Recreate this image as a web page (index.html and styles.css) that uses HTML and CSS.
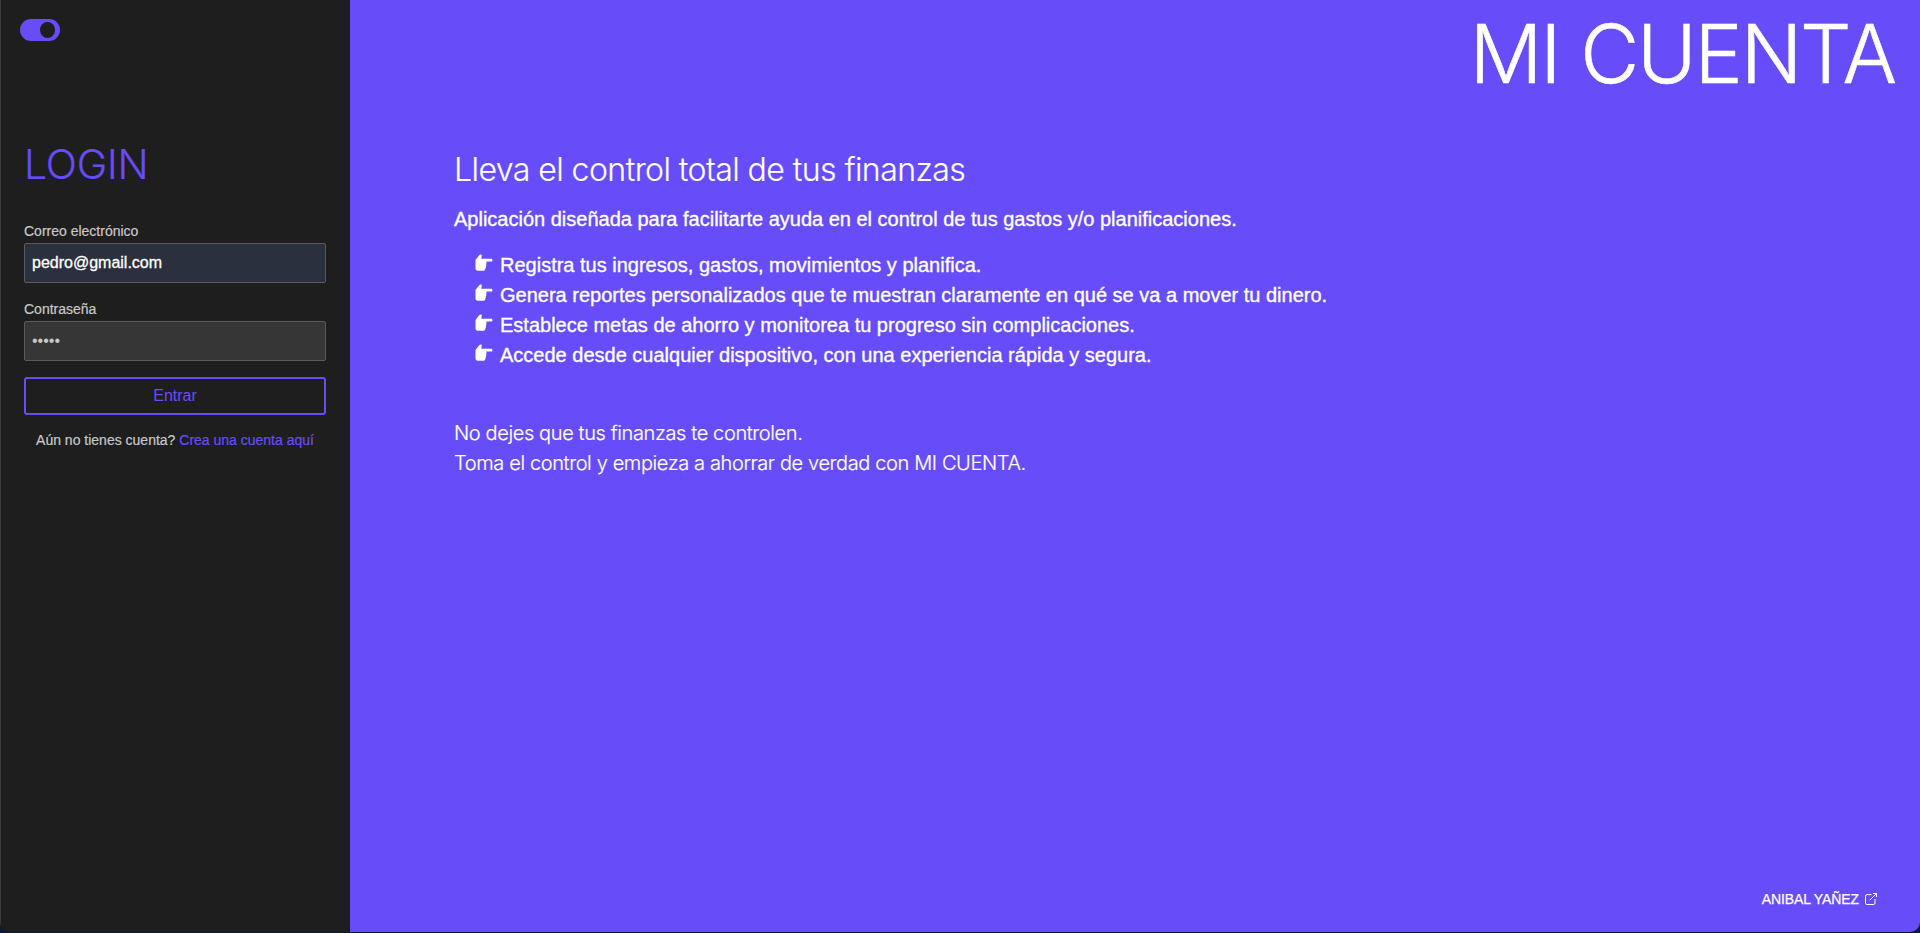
FILE: index.html
```html
<!DOCTYPE html>
<html lang="es">
<head>
<meta charset="utf-8">
<title>Mi Cuenta</title>
<link rel="stylesheet" href="styles.css">
</head>
<body>
<svg width="0" height="0" class="defs"><symbol id="hand" viewBox="0 0 18 18"><path d="M.8 5.4 4.2 1.2C5.1-.1 7.1.2 6.8 1.8L6.2 4.8H16.2C17.9 4.8 17.9 7.6 16.2 7.6H11.1C11.8 8.2 11.7 9.5 11 10C11.6 10.7 11.4 12 10.7 12.4C11.2 13 11 14.2 10.3 14.6C10.4 15.9 9.8 16.7 8.7 16.7H2.8C1.3 16.7.5 15.8.5 14.3V6.5Z"/></symbol></svg>
<div class="window">
  <aside class="sidebar">
    <div class="switch"><span class="knob"></span></div>
    <form class="login">
      <h1 class="login-title">LOGIN</h1>
      <div class="field"><label>Correo electrónico</label><div class="input filled">pedro@gmail.com</div></div>
      <div class="field"><label>Contraseña</label><div class="input dots">•••••</div></div>
      <button type="button" class="submit">Entrar</button>
      <p class="signup">Aún no tienes cuenta? <a>Crea una cuenta aquí</a></p>
    </form>
  </aside>
  <main class="main">
    <header class="brand">MI CUENTA</header>
    <section class="content">
      <h2 class="headline">Lleva el control total de tus finanzas</h2>
      <p class="lead">Aplicación diseñada para facilitarte ayuda en el control de tus gastos y/o planificaciones.</p>
      <ul class="features">
        <li><svg class="hand"><use href="#hand"/></svg>Registra tus ingresos, gastos, movimientos y planifica.</li>
        <li><svg class="hand"><use href="#hand"/></svg>Genera reportes personalizados que te muestran claramente en qué se va a mover tu dinero.</li>
        <li><svg class="hand"><use href="#hand"/></svg>Establece metas de ahorro y monitorea tu progreso sin complicaciones.</li>
        <li><svg class="hand"><use href="#hand"/></svg>Accede desde cualquier dispositivo, con una experiencia rápida y segura.</li>
      </ul>
      <p class="closing">No dejes que tus finanzas te controlen.<br>Toma el control y empieza a ahorrar de verdad con MI CUENTA.</p>
    </section>
    <footer class="credit">ANIBAL YAÑEZ<svg class="ext" viewBox="0 0 12 12"><path d="M6.5 1.6H2A1.5 1.5 0 0 0 .5 3.1V10A1.5 1.5 0 0 0 2 11.5H8.5A1.5 1.5 0 0 0 10 10V6M8 .5H11.5V4M11.5.5 4.8 7.2"/></svg></footer>
  </main>
</div>
</body>
</html>
```
FILE: styles.css
```css
* { box-sizing: border-box; margin: 0; padding: 0; }
html, body { height: 100%; }
body { background: #0b1a3c; font-family: "Liberation Sans", Arial, sans-serif; overflow: hidden; }
.defs { display: block; }
.window { display: flex; height: 932px; border-radius: 0 0 10px 10px; overflow: hidden; background: #1e1e1e; }
.sidebar { width: 350px; flex: none; background: #1e1e1e; border-left: 1px solid #3c3c3c; padding: 19px 24px 0 23px; color: #c8c8c8; }
.switch { width: 40px; height: 22px; margin-left: -4px; border-radius: 11px; background: #674dfa; padding: 3px 5px; display: flex; justify-content: flex-end; }
.knob { width: 15px; height: 16px; border-radius: 50%; background: #1e1e1e; }
.login { margin-top: 98px; }
.login-title { font: 300 41px/50px Inter, sans-serif; letter-spacing: -.2px; color: #674dfa; margin-bottom: 31px; -webkit-text-stroke: .2px; }
.field { margin-bottom: 16px; }
.field label { display: block; font-size: 14px; line-height: 22px; height: 23px; -webkit-text-stroke: .2px; }
.field + .field { margin-top: -1px; }
.input { height: 40px; border: 1px solid #5a5a5a; border-radius: 2px; background: #363636; padding: 0 7px; font-size: 16px; line-height: 38px; }
.filled { background: #2b303f; color: #fff; -webkit-text-stroke: .3px; }
.dots { line-height: 37px; }
.submit { display: block; width: 302px; height: 38px; border: 2px solid #674dfa; border-radius: 3px; background: none; color: #674dfa; font: 16px/34px "Liberation Sans", Arial, sans-serif; }
.signup { text-align: center; font-size: 14px; line-height: 20px; margin-top: 15px; -webkit-text-stroke: .2px; }
.signup a { color: #674dfa; }
.main { flex: 1; background: #674dfa; color: #fff; display: flex; flex-direction: column; }
.brand { text-align: right; padding-right: 25px; font: 300 81px/108px Inter, sans-serif; letter-spacing: -2.1px; height: 140px; -webkit-text-stroke: .6px; }
.content { padding: 10px 0 0 104px; flex: 1; }
.headline { font: 300 32px/40px Inter, sans-serif; letter-spacing: -.55px; -webkit-text-stroke: .15px; }
.lead { font-size: 20px; line-height: 30px; margin-top: 14px; -webkit-text-stroke: .35px; }
.features { list-style: none; margin: 16px 0 0 21px; font-size: 20px; line-height: 30px; -webkit-text-stroke: .35px; }
.features li { display: flex; align-items: center; gap: 7px; height: 30px; }
.hand { width: 18px; height: 18px; margin-bottom: 4px; fill: #fff; stroke: none; }
.closing { margin-top: 48px; font: 300 20px/30px Inter, sans-serif; letter-spacing: -.38px; -webkit-text-stroke: .2px; }
.credit { align-self: flex-end; display: flex; align-items: center; gap: 6px; margin: 0 43px 23px 0; font-size: 14px; letter-spacing: -.1px; line-height: 20px; -webkit-text-stroke: .25px; }
.ext { width: 12px; height: 12px; fill: none; stroke: #fff; stroke-width: 1; }
```
